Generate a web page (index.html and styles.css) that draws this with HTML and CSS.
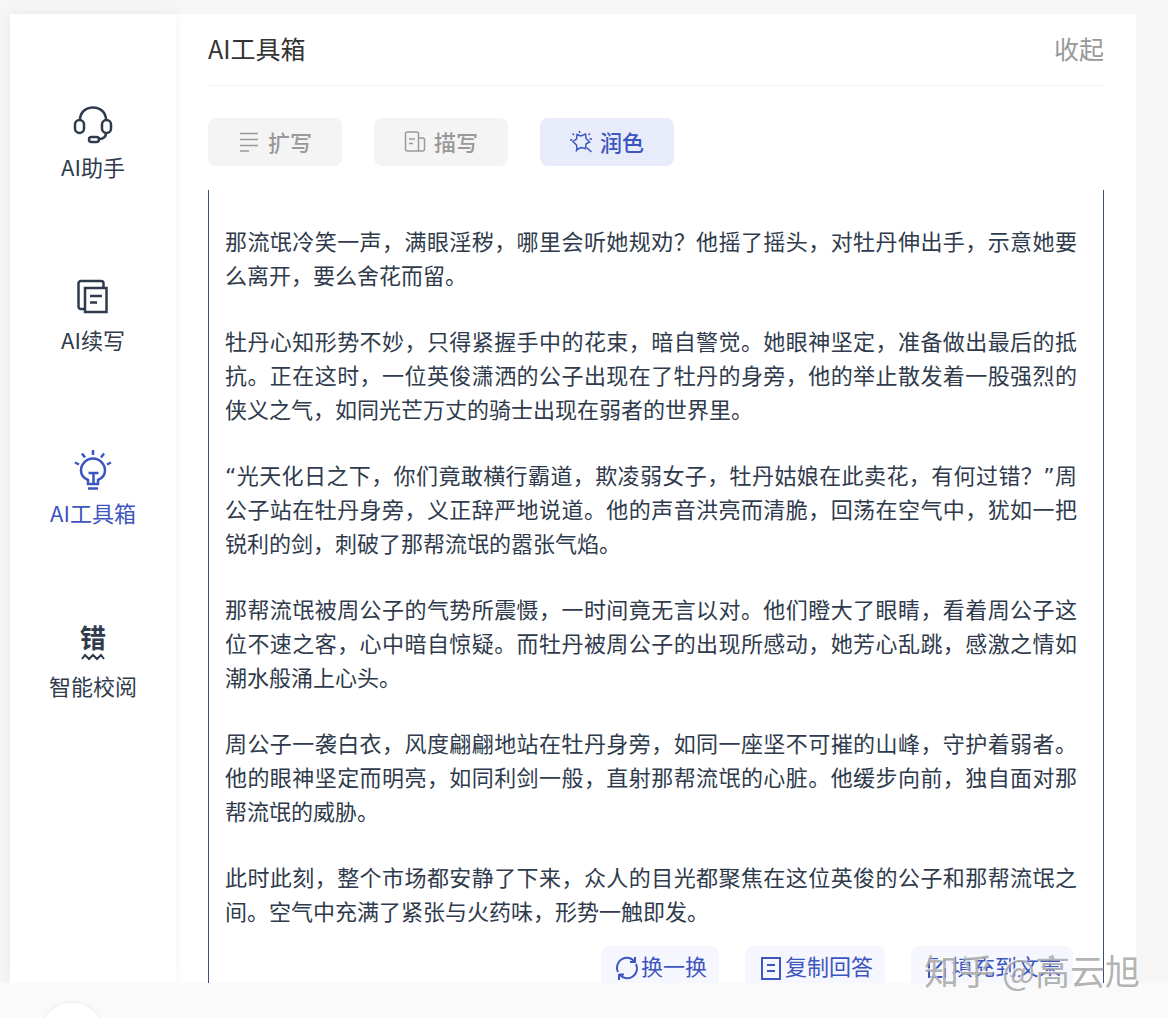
FILE: index.html
```html
<!DOCTYPE html>
<html lang="zh-CN">

<head>
  <meta charset="UTF-8" />
  <meta name="viewport" content="width=device-width, initial-scale=1.0" />
  <title>AI工具箱</title>
  <link rel="stylesheet" href="styles.css">
</head>

<body>
  <div class="app">
    <nav class="sidebar">
      <a class="nav-item" href="#assistant">
        <svg class="nav-icon" viewBox="0 0 40 40">
          <path d="M7 15C7 7 13 2.500 20 2.500S33 7 33 15" />
          <rect x="2" y="15" width="9" height="13" rx="4.500" />
          <rect x="29" y="15" width="9" height="13" rx="4.500" />
          <path d="M33 28c0 4-3 6-7 6" />
          <rect x="16" y="32" width="10" height="5" rx="2.500" />
        </svg>
        <span>AI助手</span>
      </a>
      <a class="nav-item" href="#continue">
        <svg class="nav-icon" viewBox="0 0 40 40">
          <path d="M11 31H8a2.500 2.500 0 0 1-2.500-2.500v-23A2.500 2.500 0 0 1 8 3h20a2.500 2.500 0 0 1 2.500 2.500V10" />
          <path d="M12 10h21.500v24H12zM17 18h12M17 24.500h7" />
        </svg>
        <span>AI续写</span>
      </a>
      <a class="nav-item active" href="#toolbox">
        <svg class="nav-icon" viewBox="0 0 40 40">
          <path d="M15 33v-4c-4.500-2-7-5-7-9.500a12 12 0 0 1 24 0c0 4.500-2.500 7.500-7 9.500v4zM15 37.500h10M15.500 22h10M20.500 22v11" />
          <path d="M20 -1v5M9 2.500l3 4M31 2.500l-3 4M2 11.500l4 2M38 11.500l-4 2" />
        </svg>
        <span>AI工具箱</span>
      </a>
      <a class="nav-item" href="#proofread">
        <span class="proof-icon">错
          <svg viewBox="0 0 24 8">
            <path d="M1 6l3-4 4 4 4-4 4 4 4-4 3 4" />
          </svg>
        </span>
        <span>智能校阅</span>
      </a>
    </nav>

    <main class="content">
      <header class="content-header">
        <h1>AI工具箱</h1>
        <button type="button" class="collapse">收起</button>
      </header>

      <div class="tabs">
        <button type="button" class="tab">
          <svg class="tab-icon" viewBox="0 0 22 22">
            <path d="M2 3.500h18M2 9.500h18M2 15.500h18M2 21h9" />
          </svg>
          扩写
        </button>
        <button type="button" class="tab">
          <svg class="tab-icon" viewBox="0 0 22 22">
            <path d="M3.500 2h9a2 2 0 0 1 2 2v17h-11a2 2 0 0 1-2-2v-15a2 2 0 0 1 2-2zM14.500 8h4a2 2 0 0 1 2 2v9a2 2 0 0 1-2 2h-4M5 9h6M5 13.500h4" />
          </svg>
          描写
        </button>
        <button type="button" class="tab active">
          <svg class="tab-icon" viewBox="0 0 22 22">
            <path d="M7 4.500l4 1.500 4.500-2 .500 4.500 3.500 3.500-3.500 2-.500 4.500-4.500-1-4 2-.500-4.500L3 11.500l3.500-2.500z" />
            <path d="M9.500 1v2M18.500 5L20 3.500M0 10h2.500M4 5L2.500 3.500M7 19l-1 2.500M16.500 17.500l5 4.500M19.500 9H22" />
          </svg>
          润色
        </button>
      </div>

      <article class="result">
        <p>那流氓冷笑一声，满眼淫秽，哪里会听她规劝？他摇了摇头，对牡丹伸出手，示意她要么离开，要么舍花而留。</p>
        <p>牡丹心知形势不妙，只得紧握手中的花束，暗自警觉。她眼神坚定，准备做出最后的抵抗。正在这时，一位英俊潇洒的公子出现在了牡丹的身旁，他的举止散发着一股强烈的侠义之气，如同光芒万丈的骑士出现在弱者的世界里。</p>
        <p>“光天化日之下，你们竟敢横行霸道，欺凌弱女子，牡丹姑娘在此卖花，有何过错？”周公子站在牡丹身旁，义正辞严地说道。他的声音洪亮而清脆，回荡在空气中，犹如一把锐利的剑，刺破了那帮流氓的嚣张气焰。</p>
        <p>那帮流氓被周公子的气势所震慑，一时间竟无言以对。他们瞪大了眼睛，看着周公子这位不速之客，心中暗自惊疑。而牡丹被周公子的出现所感动，她芳心乱跳，感激之情如潮水般涌上心头。</p>
        <p>周公子一袭白衣，风度翩翩地站在牡丹身旁，如同一座坚不可摧的山峰，守护着弱者。他的眼神坚定而明亮，如同利剑一般，直射那帮流氓的心脏。他缓步向前，独自面对那帮流氓的威胁。</p>
        <p>此时此刻，整个市场都安静了下来，众人的目光都聚焦在这位英俊的公子和那帮流氓之间。空气中充满了紧张与火药味，形势一触即发。</p>
        <div class="actions">
          <button type="button" class="action">
            <svg class="action-icon" viewBox="0 0 24 24">
              <path d="M3 16A9.800 9.800 0 0 1 19 5M21 8A9.800 9.800 0 0 1 5 19M20 1v6M20 6h-5M4 24v-6M4 18.500h5" />
            </svg>
            换一换
          </button>
          <button type="button" class="action">
            <svg class="action-icon" viewBox="0 0 24 24">
              <path d="M3 2h18v21H3zM8 9h8M8 15h8" />
            </svg>
            复制回答
          </button>
          <button type="button" class="action">
            <svg class="action-icon" viewBox="0 0 24 24">
              <path d="M13 3H4v18h16V12M10 14l10-11" />
            </svg>
            填充到文末
          </button>
        </div>
      </article>
    </main>
  </div>

  <footer class="footer">
    <div class="float-ball"></div>
  </footer>

  <div class="watermark">知乎 @高云旭</div>
</body>

</html>
```
FILE: styles.css
```css
* {
  box-sizing: border-box;
}

body {
  display: flex;
  flex-direction: column;
  height: 100vh;
  margin: 0;
  overflow: hidden;
  position: relative;
  background: #f6f6f6;
  color: #2f3b4c;
  font-family: "Noto Sans CJK SC", sans-serif;
  font-size: 22px;
  line-height: 32px;
}

button {
  border: none;
  font: inherit;
  cursor: pointer;
}

svg {
  fill: none;
  stroke: currentColor;
  stroke-width: 2;
}

.app {
  display: flex;
  flex: 1;
  min-height: 0;
  margin: 14px 32px 0 10px;
  background: #fff;
}

.sidebar {
  display: flex;
  flex-direction: column;
  gap: 96px;
  flex: 0 0 166px;
  padding-top: 91px;
  box-shadow: 0 0 12px rgba(0, 0, 0, 0.06);
}

.nav-item {
  display: flex;
  flex-direction: column;
  align-items: center;
  gap: 5px;
  color: inherit;
  text-decoration: none;
}

.nav-item.active {
  color: #3d55c0;
}

.nav-icon {
  width: 40px;
  height: 40px;
  overflow: visible;
  stroke-width: 2.5;
}

.proof-icon {
  display: flex;
  flex-direction: column;
  align-items: center;
  height: 40px;
  font-size: 26px;
  font-weight: 700;
  line-height: 26px;
}

.proof-icon svg {
  flex: none;
  width: 24px;
  height: 8px;
  margin-top: 3px;
}

.content {
  display: flex;
  flex-direction: column;
  flex: 1;
  min-width: 0;
  padding: 0 32px;
}

.content-header {
  display: flex;
  justify-content: space-between;
  align-items: center;
  flex: 0 0 72px;
  padding-bottom: 4px;
  border-bottom: 1px solid #f2f2f2;
}

.content-header h1 {
  margin: 0;
  color: #333;
  font-size: 25px;
  font-weight: 400;
}

.collapse {
  padding: 0;
  background: none;
  color: #999;
  font-size: 25px;
}

.tabs {
  display: flex;
  gap: 32px;
  margin: 32px 0 24px;
}

.tab {
  display: flex;
  justify-content: center;
  align-items: center;
  gap: 8px;
  width: 134px;
  height: 48px;
  padding: 0 0 2px;
  border-radius: 8px;
  background: #f4f4f4;
  color: #999;
  font-weight: 500;
}

.tab.active {
  background: #e8ecfa;
  color: #3d55c0;
}

.tab-icon {
  width: 22px;
  height: 22px;
  overflow: visible;
  stroke-width: 1.5;
}

/* DejaVu Sans first: narrow curly quotes instead of full-width ones */
.result {
  flex: 1;
  min-height: 0;
  overflow: hidden;
  padding: 36px 26px 0 16px;
  border: solid #3f4f86;
  border-width: 0 1px;
  font-family: "DejaVu Sans", "Noto Sans CJK SC", sans-serif;
  line-height: 34px;
  text-align: justify;
}

.result p {
  margin: 0 0 32px;
}

.actions {
  display: flex;
  justify-content: flex-end;
  gap: 26px;
  margin: -16px 4px 0 0;
}

.action {
  display: flex;
  align-items: center;
  gap: 2px;
  height: 44px;
  padding: 0 12px 0 14px;
  border-radius: 8px;
  background: #f5f6fe;
  color: #3d55c0;
}

.action-icon {
  width: 24px;
  height: 24px;
}

.footer {
  position: relative;
  flex: 0 0 35px;
  overflow: hidden;
  background: #fafafa;
}

.float-ball {
  position: absolute;
  top: 20px;
  left: 40px;
  width: 64px;
  height: 64px;
  border-radius: 50%;
  background: #fff;
  box-shadow: 0 0 4px rgba(0, 0, 0, 0.08);
}

.watermark {
  position: absolute;
  right: 28px;
  bottom: 24px;
  color: rgba(160, 160, 160, 0.8);
  font-size: 35px;
  line-height: 48px;
  text-shadow: -1px -1px 0 rgba(255, 255, 255, 0.8);
  pointer-events: none;
}
```
